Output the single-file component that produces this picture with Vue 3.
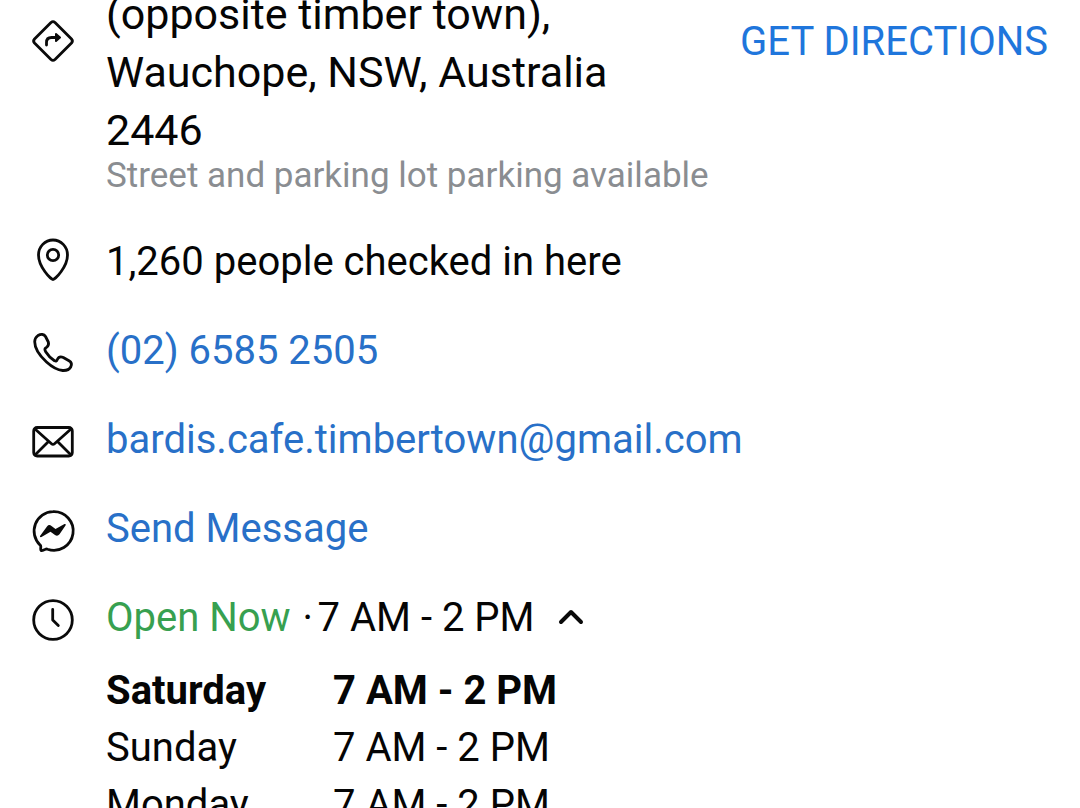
<script setup>
const hours = [
  { day: 'Saturday', time: '7 AM - 2 PM', today: true },
  { day: 'Sunday', time: '7 AM - 2 PM' },
  { day: 'Monday', time: '7 AM - 2 PM' },
]
</script>

<template>
  <main class="page">
    <section class="row address">
      <svg class="icon" viewBox="0 0 44 44" aria-hidden="true">
        <path d="M20 3.5 3.5 20Q1.7 22 3.5 24L20 40.5Q22 42.3 24 40.5L40.5 24Q42.3 22 40.5 20L24 3.5Q22 1.7 20 3.5Z" />
        <path d="M15.5 26V23.5Q15.5 18.5 20.5 18.5H27" />
        <path class="head" d="M25 15 29 18.5 25 22Z" />
      </svg>
      <div class="place">
        <p class="street">(opposite timber town),<br />Wauchope, NSW, Australia<br />2446</p>
        <p class="note">Street and parking lot parking available</p>
      </div>
      <a class="directions" href="#">GET DIRECTIONS</a>
    </section>

    <section class="row">
      <svg class="icon" viewBox="0 0 44 44" aria-hidden="true">
        <path d="M22 37.5C20 37.5 7.500 25 7.500 13A14.500 15 0 0 1 36.500 13C36.500 25 24 37.500 22 37.500Z" />
        <circle cx="22" cy="13" r="5.700" />
      </svg>
      <span>1,260 people checked in here</span>
    </section>

    <section class="row">
      <svg class="icon" viewBox="0 0 44 44" aria-hidden="true">
        <path d="M3.700 10.700C3.700 8 5 6 7 4.500C10 2.700 13 3 14.500 5.500L17.300 11C18 13 17.500 14.500 16 16L14.500 17.200C13.500 18 14 19.500 14.700 20.700C17 24.500 20 27.500 23.500 29.700C25 30.700 25.700 30 26.300 28.500C27.500 26 30 25.500 32.300 26.500L38 29.700C40.700 31.300 41 33.500 39.700 36C38.300 38.700 35.500 39.700 31.700 39.500C26.500 39 21 36 15.500 31C8.500 24.500 3.700 17 3.700 10.700Z" />
      </svg>
      <a href="#">(02) 6585 2505</a>
    </section>

    <section class="row">
      <svg class="icon" viewBox="0 0 44 44" aria-hidden="true">
        <rect x="2.700" y="7.500" width="38.600" height="28.500" rx="3.500" />
        <path d="M4 9 20.500 23.700Q22 25 23.500 23.700L40 9M4 35 17 22M40 35 27 22" />
      </svg>
      <a href="#">bardis.cafe.timbertown@gmail.com</a>
    </section>

    <section class="row">
      <svg class="icon" viewBox="0 0 44 44" aria-hidden="true">
        <path d="M22 2.700A19.300 19.300 0 1 1 16.500 40.200Q15.500 39.800 14.500 40.300L11.500 41.500Q9.500 42 9.700 40L9.800 37.500Q9.800 36.600 9 35.900A19.300 19.300 0 0 1 22 2.700Z" />
        <path class="solid" d="M9 27 16 17.500Q18 15 20.500 17L24.500 20 33.500 15Q35.500 14.500 34.500 16.500L28.500 25.300Q26.500 27.700 24 26L19.500 22.700 10.500 28Q8.500 28.500 9 27Z" />
      </svg>
      <a href="#">Send Message</a>
    </section>

    <section class="row">
      <svg class="icon" viewBox="0 0 44 44" aria-hidden="true">
        <circle cx="22" cy="22" r="19.300" />
        <path d="M21.700 11.500V22L27.300 27.500" />
      </svg>
      <button class="toggle" type="button" aria-expanded="true">
        <span class="open">Open Now</span><span class="dot">·</span><span>7 AM - 2 PM</span>
        <svg class="chevron" viewBox="0 0 26 20" aria-hidden="true"><path d="M3 14 13 4 23 14" /></svg>
      </button>
    </section>

    <table class="hours">
      <tbody>
        <tr v-for="entry in hours" :key="entry.day" :class="{ today: entry.today }">
          <th scope="row">{{ entry.day }}</th>
          <td>{{ entry.time }}</td>
        </tr>
      </tbody>
    </table>
  </main>
</template>

<style>
html, body { margin: 0; background: #fff; overflow: hidden; }
</style>

<style scoped>
.page { font: 40px/57px Roboto, sans-serif; color: #050505; height: 100vh; overflow: hidden; }
.row { display: flex; align-items: center; gap: 31px; padding: 0 32px 0 31px; height: 57px; margin-bottom: 32px; }
.address { align-items: flex-start; height: auto; margin: -15px 0 40px; }
.icon { width: 44px; height: 44px; flex: none; margin-top: 4px; overflow: visible; fill: none; stroke: #0a0a0a; stroke-width: 2.8; stroke-linecap: round; stroke-linejoin: round; }
.address .icon { margin-top: 34px; }
.icon .solid { fill: #0a0a0a; stroke: none; }
.icon .head { fill: #0a0a0a; stroke-width: 2; }
p { margin: 0; }
.place { flex: 1; }
.street { font-size: 43px; line-height: 58px; }
.note { font-size: 35px; line-height: 34px; color: #8a8d91; }
a { color: #2870c8; text-decoration: none; }
.directions { color: #1f76dc; margin-top: 28px; }
.toggle { display: flex; align-items: center; padding: 0; border: 0; background: none; font: inherit; color: inherit; }
.open { color: #37a050; margin-right: 12px; }
.dot { width: 15px; text-align: left; }
.chevron { width: 26px; height: 20px; margin-left: 24px; fill: none; stroke: #0a0a0a; stroke-width: 4; stroke-linecap: round; stroke-linejoin: round; }
.hours { margin: -16px 0 0 106px; border-collapse: collapse; }
th, td { padding: 0; text-align: left; font-weight: 400; }
th { width: 227px; }
.today th, .today td { font-weight: 700; }
</style>
